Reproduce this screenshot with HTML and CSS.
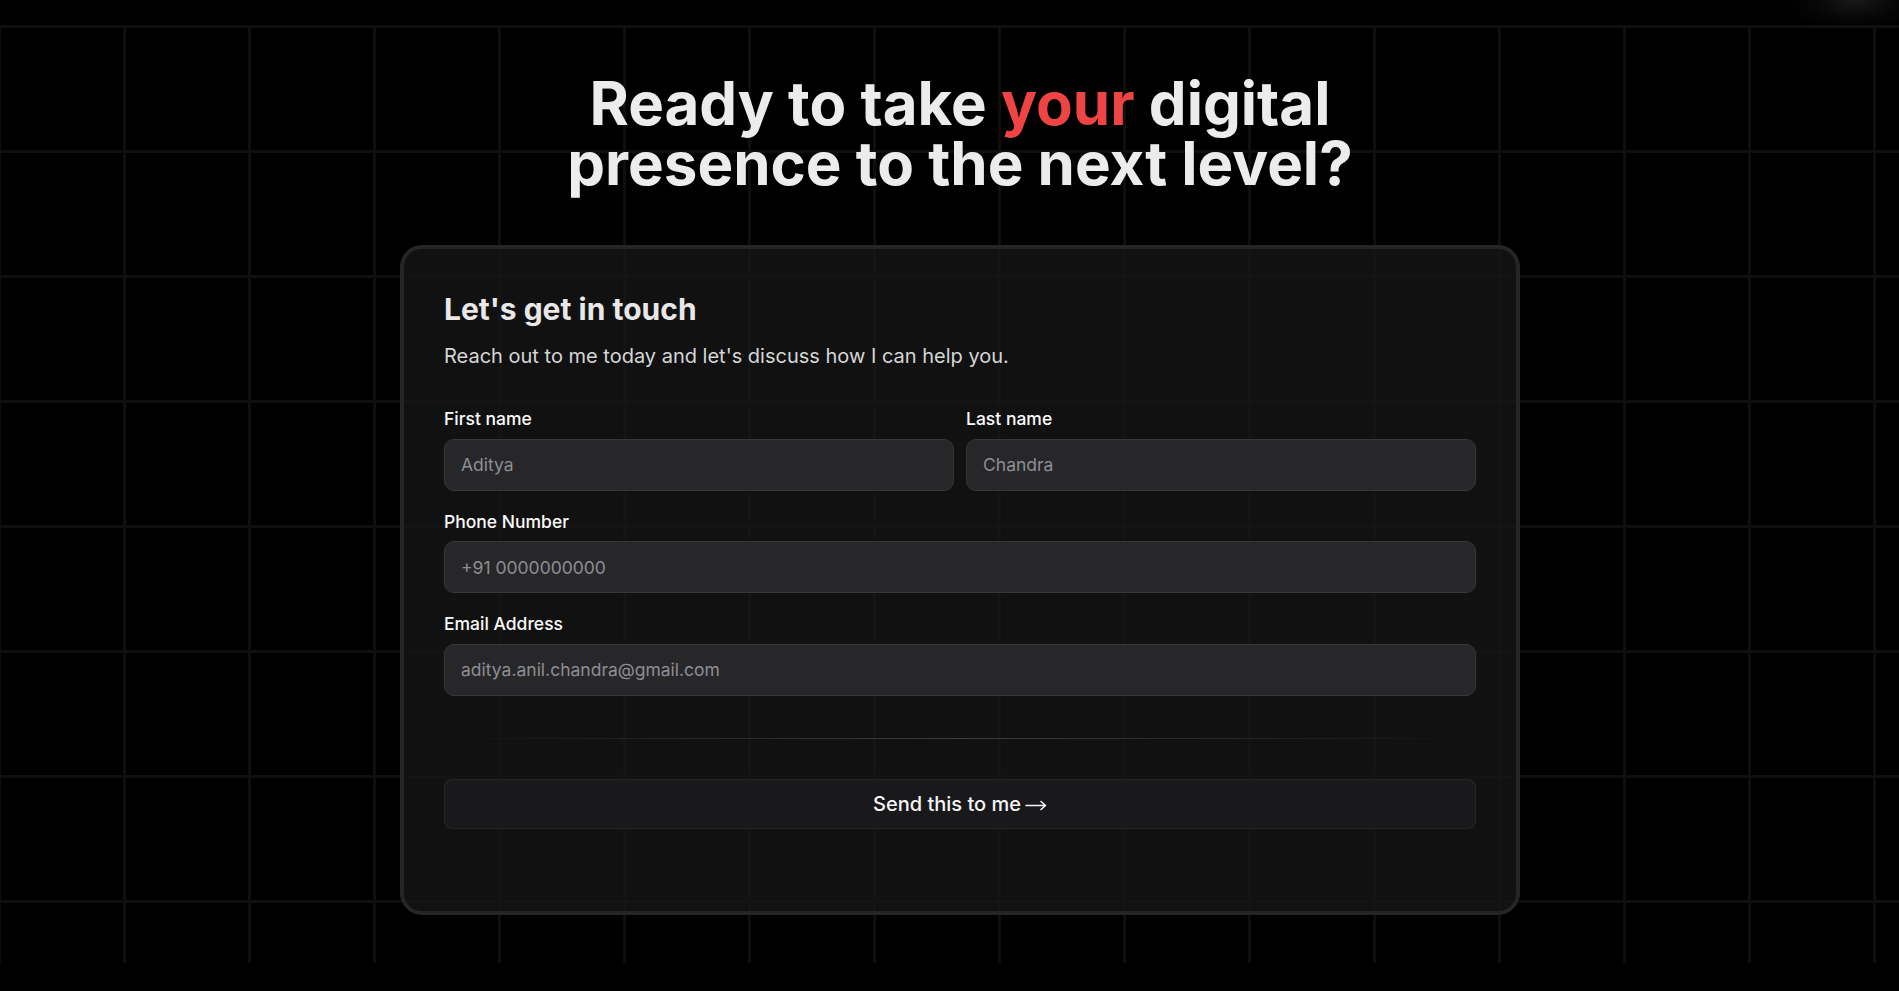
FILE: index.html
```html
<!DOCTYPE html>
<html lang="en">
<head>
<meta charset="utf-8">
<title>Contact</title>
<link rel="stylesheet" href="styles.css">
</head>
<body>
<div class="page">
  <div class="grid-bg"></div>
  <div class="glow"></div>
  <main class="content">
    <h1 class="headline">Ready to take <span class="accent">your</span> digital<br>presence to the next level?</h1>
    <section class="card">
      <h2 class="card-title">Let's get in touch</h2>
      <p class="card-sub">Reach out to me today and let's discuss how I can help you.</p>
      <form class="form">
        <div class="row">
          <div class="field">
            <label class="label" for="fn">First name</label>
            <input class="input" id="fn" type="text" placeholder="Aditya">
          </div>
          <div class="field">
            <label class="label" for="ln">Last name</label>
            <input class="input" id="ln" type="text" placeholder="Chandra">
          </div>
        </div>
        <div class="field">
          <label class="label" for="ph">Phone Number</label>
          <input class="input" id="ph" type="text" placeholder="+91 0000000000">
        </div>
        <div class="field last">
          <label class="label" for="em">Email Address</label>
          <input class="input" id="em" type="email" placeholder="aditya.anil.chandra@gmail.com">
        </div>
        <div class="divider"></div>
        <button class="btn" type="button"><span>Send this to me</span><svg class="arrow" width="22" height="12" viewBox="0 0 22 12" aria-hidden="true"><path d="M1 6.5H20.5M16 2.5L20.5 6.5L16 10.5" fill="none" stroke="#f5f5f5" stroke-width="1.6" stroke-linecap="round" stroke-linejoin="round"/></svg></button>
      </form>
    </section>
  </main>
</div>
</body>
</html>
```
FILE: styles.css
```css
* { box-sizing: border-box; }
html, body {
  margin: 0;
  padding: 0;
  background: #000;
  overflow: hidden;
}
body {
  font-family: "Inter", "Noto Sans", "Liberation Sans", sans-serif;
  color: #e5e5e5;
  height: 991px;
}
.page {
  position: relative;
  width: 1920px;
  height: 991px;
}
.grid-bg {
  position: absolute;
  left: 0;
  top: 25px;
  width: 100%;
  height: 938px;
  background-image:
    linear-gradient(to right, #0f0f0f 0, #0f0f0f 3px, transparent 3px),
    linear-gradient(to bottom, #0f0f0f 0, #0f0f0f 3px, transparent 3px);
  background-size: 125px 125px;
  background-position: 123px 0;
  z-index: 0;
}
.glow {
  position: absolute;
  left: 1790px;
  top: -30px;
  width: 130px;
  height: 60px;
  background: radial-gradient(ellipse at center, rgba(34,34,34,0.7) 0%, rgba(18,18,18,0.35) 45%, transparent 75%);
  z-index: 0;
}
.content {
  position: relative;
  z-index: 1;
  padding-top: 73px;
  display: flex;
  flex-direction: column;
  align-items: center;
}
.headline {
  margin: 0;
  font-size: 60px;
  line-height: 60px;
  font-weight: 700;
  text-align: center;
  color: #ececec;
}
.accent { color: #ef4444; }
.card {
  margin-top: 52px;
  width: 1120px;
  border: 4px solid #252525;
  border-radius: 22px;
  background: rgba(22, 22, 22, 0.78);
  padding: 40px 40px 82px;
}
.card-title {
  margin: 0;
  font-size: 30px;
  line-height: 40px;
  font-weight: 700;
  color: #e8e8e8;
}
.card-sub {
  margin: 13px 0 0;
  font-size: 20px;
  line-height: 28px;
  color: #d6d6d6;
}
.form {
  margin-top: 40px;
  display: flex;
  flex-direction: column;
}
.row {
  display: flex;
  gap: 12px;
}
.row .field { flex: 1; }
.field {
  display: flex;
  flex-direction: column;
  gap: 11px;
  margin-bottom: 22px;
}
.field.last { margin-bottom: 0; }
.label {
  font-size: 17.5px;
  line-height: 17.5px;
  font-weight: 500;
  color: #fafafa;
}
.input {
  height: 52px;
  width: 100%;
  border: 1px solid #37373b;
  border-radius: 10px;
  background: #27272a;
  padding: 0 16px;
  font-family: inherit;
  font-size: 17.5px;
  color: #e5e5e5;
  outline: none;
}
.input::placeholder { color: #8e8e93; }
.divider {
  margin: 42px 0 40px;
  height: 1px;
  background: linear-gradient(to right, transparent, #3d3d3d 50%, transparent);
}
.btn {
  height: 50px;
  width: 100%;
  border: 1px solid #26262a;
  border-radius: 8px;
  background: #19191c;
  color: #f5f5f5;
  font-family: inherit;
  font-size: 20px;
  font-weight: 500;
  cursor: pointer;
  display: flex;
  align-items: center;
  justify-content: center;
  gap: 4px;
}
.arrow {
  display: block;
  margin-top: 2px;
}
```
